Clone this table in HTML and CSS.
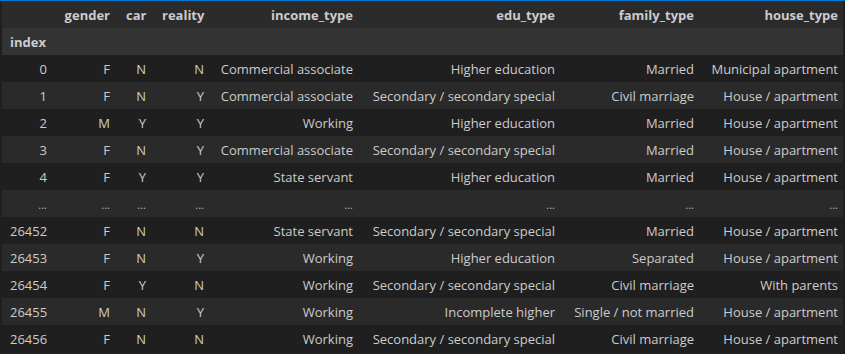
FILE: index.html
```html
<!DOCTYPE html>
<html>
<head>
<meta charset="utf-8">
<link rel="stylesheet" href="styles.css">
</head>
<body>
<div class="frame">
  <div class="scroll">
    <table class="df">
      <colgroup>
        <col class="c-idx"><col class="c-gender"><col class="c-car"><col class="c-reality"><col class="c-income"><col class="c-edu"><col class="c-family"><col class="c-house">
      </colgroup>
      <thead>
        <tr class="cols">
          <th></th><th>gender</th><th>car</th><th>reality</th><th>income_type</th><th>edu_type</th><th>family_type</th><th>house_type</th>
        </tr>
        <tr class="names">
          <th class="left">index</th><th></th><th></th><th></th><th></th><th></th><th></th><th></th>
        </tr>
      </thead>
      <tbody>
        <tr><th>0</th><td>F</td><td>N</td><td>N</td><td>Commercial associate</td><td>Higher education</td><td>Married</td><td>Municipal apartment</td></tr>
        <tr><th>1</th><td>F</td><td>N</td><td>Y</td><td>Commercial associate</td><td>Secondary / secondary special</td><td>Civil marriage</td><td>House / apartment</td></tr>
        <tr><th>2</th><td>M</td><td>Y</td><td>Y</td><td>Working</td><td>Higher education</td><td>Married</td><td>House / apartment</td></tr>
        <tr><th>3</th><td>F</td><td>N</td><td>Y</td><td>Commercial associate</td><td>Secondary / secondary special</td><td>Married</td><td>House / apartment</td></tr>
        <tr><th>4</th><td>F</td><td>Y</td><td>Y</td><td>State servant</td><td>Higher education</td><td>Married</td><td>House / apartment</td></tr>
        <tr class="dots"><th>...</th><td>...</td><td>...</td><td>...</td><td>...</td><td>...</td><td>...</td><td>...</td></tr>
        <tr><th>26452</th><td>F</td><td>N</td><td>N</td><td>State servant</td><td>Secondary / secondary special</td><td>Married</td><td>House / apartment</td></tr>
        <tr><th>26453</th><td>F</td><td>N</td><td>Y</td><td>Working</td><td>Higher education</td><td>Separated</td><td>House / apartment</td></tr>
        <tr><th>26454</th><td>F</td><td>Y</td><td>N</td><td>Working</td><td>Secondary / secondary special</td><td>Civil marriage</td><td>With parents</td></tr>
        <tr><th>26455</th><td>M</td><td>N</td><td>Y</td><td>Working</td><td>Incomplete higher</td><td>Single / not married</td><td>House / apartment</td></tr>
        <tr><th>26456</th><td>F</td><td>N</td><td>N</td><td>Working</td><td>Secondary / secondary special</td><td>Civil marriage</td><td>House / apartment</td></tr>
      </tbody>
    </table>
  </div>
</div>
</body>
</html>
```
FILE: styles.css
```css
html, body {
  margin: 0;
  background: #1f1f1f;
}
body {
  border-top: 1px solid #0078d4;
  overflow: hidden;
  height: 353px;
  font-family: "Open Sans", "Noto Sans", sans-serif;
  font-size: 13px;
  color: #cccccc;
}
.frame {
  padding: 0 2px;
}
.scroll {
  overflow: hidden;
}
.df {
  border-collapse: collapse;
  border-spacing: 0;
  table-layout: fixed;
  width: 844px;
}
.c-idx { width: 53px; }
.c-gender { width: 63px; }
.c-car { width: 36px; }
.c-reality { width: 58px; }
.c-income { width: 149px; }
.c-edu { width: 202px; }
.c-family { width: 139px; }
.c-house { width: 144px; }
.df th, .df td {
  height: 27px;
  padding: 1px 8px 0;
  text-align: right;
  white-space: nowrap;
  vertical-align: middle;
  line-height: 17px;
  box-sizing: border-box;
}
.df thead th {
  font-weight: bold;
}
.df tbody th {
  font-weight: normal;
}
.df .cols {
  background: #2b2b2b;
}
.df .names {
  background: #333333;
}
.df .names .left {
  text-align: left;
}
.df tbody tr:nth-child(even) {
  background: #2a2a2a;
}
.df tbody tr:nth-child(odd) {
  background: #1f1f1f;
}
.df .dots th, .df .dots td {
  font-size: 11px;
  color: #b8b8b8;
}
```
